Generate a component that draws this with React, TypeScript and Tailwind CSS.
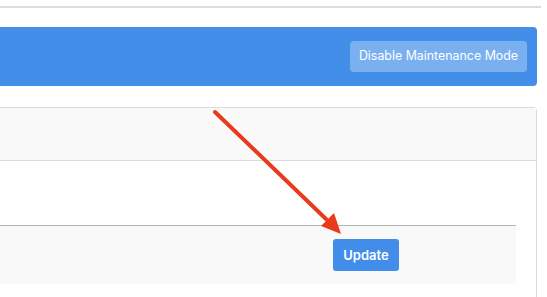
export default function App() {
  return (
    <div className="relative w-[547px] h-[297px] overflow-hidden bg-white font-['Inter',sans-serif]">
      <div className="mt-[6px] w-[541px] h-[2px] bg-[#dcdcdc]" />

      <div className="mt-[19px] w-[537px] h-[59px] bg-[#428ee9] rounded-r-[4px] flex items-center justify-end pr-[10px]">
        <button className="h-[31px] w-[177px] rounded-[4px] bg-[#7aaff0] text-white text-[12.4px] leading-none">
          Disable Maintenance Mode
        </button>
      </div>

      <div className="mt-[21px] w-[537px] border-t border-r border-[#dcdcdc] rounded-tr-[4px]">
        <div className="h-[53px] bg-[#f9f9f9] border-b border-[#dcdcdc]" />
        <div className="pr-[20px] pt-[64px]">
          <div className="h-[59px] bg-[#f9f9f9] border-t border-[#b5b5b5] flex items-center pl-[333px]">
            <button className="h-[32px] w-[66px] rounded-[3px] bg-[#418de9] text-white text-[13px] font-semibold leading-none">
              Update
            </button>
          </div>
          <div className="h-[40px]" />
        </div>
      </div>

      <svg className="absolute left-0 top-0" width="547" height="297" viewBox="0 0 547 297">
        <line x1="215" y1="112" x2="326" y2="219" stroke="#ea3a1c" strokeWidth="4" strokeLinecap="round" />
        <polygon points="341,234 321,226 334,213" fill="#ea3a1c" />
      </svg>
    </div>
  )
}
